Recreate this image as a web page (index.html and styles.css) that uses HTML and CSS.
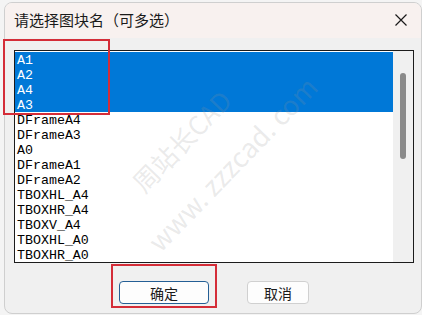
FILE: index.html
```html
<!DOCTYPE html>
<html lang="zh-CN">
<head>
    <meta charset="UTF-8">
    <title>请选择图块名</title>
    <link rel="stylesheet" href="styles.css">
</head>
<body>
    <div class="dialog">
        <div class="titlebar">
            <span class="title">请选择图块名（可多选）</span>
            <svg class="close" width="12" height="12" viewBox="0 0 12 12">
                <path d="M0.5 0.5 L11.5 11.5 M11.5 0.5 L0.5 11.5" stroke="#1a1a1a" stroke-width="1.2" fill="none"/>
            </svg>
        </div>

        <div class="content">
            <div class="listbox">
                <ul class="items">
                    <li class="selected">A1</li>
                    <li class="selected">A2</li>
                    <li class="selected">A4</li>
                    <li class="selected">A3</li>
                    <li>DFrameA4</li>
                    <li>DFrameA3</li>
                    <li>A0</li>
                    <li>DFrameA1</li>
                    <li>DFrameA2</li>
                    <li>TBOXHL_A4</li>
                    <li>TBOXHR_A4</li>
                    <li>TBOXV_A4</li>
                    <li>TBOXHL_A0</li>
                    <li>TBOXHR_A0</li>
                </ul>
                <div class="scrollbar">
                    <div class="thumb"></div>
                </div>
            </div>

            <div class="buttons">
                <button class="btn btn-default">确定</button>
                <button class="btn">取消</button>
            </div>
        </div>
    </div>

    <!-- watermark and red annotation boxes sit over the dialog -->
    <div class="watermark wm-name">周站长CAD</div>
    <div class="watermark wm-url">www. zzzcad. com</div>
    <div class="mark mark-list"></div>
    <div class="mark mark-ok"></div>
</body>
</html>
```

FILE: styles.css
```css
* {
    margin: 0;
    padding: 0;
    box-sizing: border-box;
}

body {
    width: 422px;
    height: 315px;
    overflow: hidden;
    background-color: #f4f4f4;
    font-family: "Noto Sans CJK SC", "Noto Sans", sans-serif;
    position: relative;
}

.dialog {
    margin: 2px 0 0 4px;
    width: 418px;
    height: 312px;
    border: 1px solid #cfcfcf;
    border-radius: 8px;
    background-color: #f0f0f0;
    overflow: hidden;
    display: flex;
    flex-direction: column;
}

.titlebar {
    height: 35px;
    background-color: #f8f1ef;
    display: flex;
    align-items: center;
    justify-content: space-between;
    padding: 0 14px 0 9px;
}

.title {
    font-size: 15px;
    color: #1a1a1a;
    line-height: 20px;
    margin-top: -1px;
}

.close {
    display: block;
    margin-top: -2px;
}

.content {
    padding: 12px 0 0 9px;
}

.listbox {
    width: 400px;
    height: 213px;
    border: 1px solid #1c1c1c;
    background-color: #fff;
    display: flex;
    overflow: hidden;
}

.items {
    list-style: none;
    flex-grow: 1;
    padding-top: 1px;
    font-family: "Liberation Mono", monospace;
    font-size: 13.3px;
    color: #000;
}

.items li {
    height: 15px;
    line-height: 17px;
    padding-left: 2px;
    white-space: nowrap;
}

.items li.selected {
    background-color: #0078d7;
    color: #fff;
}

.scrollbar {
    width: 20px;
    background-color: #f0f0f0;
    padding: 22px 0 0 7px;
}

.thumb {
    width: 6px;
    height: 86px;
    background-color: #8a8a8a;
    border-radius: 3px;
}

.buttons {
    display: flex;
    gap: 38px;
    padding-left: 105px;
    margin-top: 18px;
}

.btn {
    height: 23px;
    width: 62px;
    border: 1px solid #d0d0d0;
    border-radius: 4px;
    background-color: #fdfdfd;
    font-family: "Noto Sans CJK SC", sans-serif;
    font-size: 14px;
    color: #1a1a1a;
    line-height: 20px;
}

.btn-default {
    width: 90px;
    border-color: #245f95;
}

/* faint diagonal watermark */
.watermark {
    position: absolute;
    font-family: "Noto Sans CJK SC", "Liberation Sans", sans-serif;
    color: rgba(150, 150, 150, 0.2);
    transform: rotate(-46deg);
    transform-origin: left bottom;
    white-space: nowrap;
    line-height: 1;
}

.wm-name {
    left: 146px;
    top: 170px;
    font-size: 26px;
}

.wm-url {
    left: 162px;
    top: 228px;
    font-size: 27px;
}

/* red annotation boxes */
.mark {
    position: absolute;
    border: 2px solid #d42d38;
}

.mark-list {
    left: 3px;
    top: 39px;
    width: 107px;
    height: 76px;
}

.mark-ok {
    left: 111px;
    top: 264px;
    width: 106px;
    height: 44px;
}
```
